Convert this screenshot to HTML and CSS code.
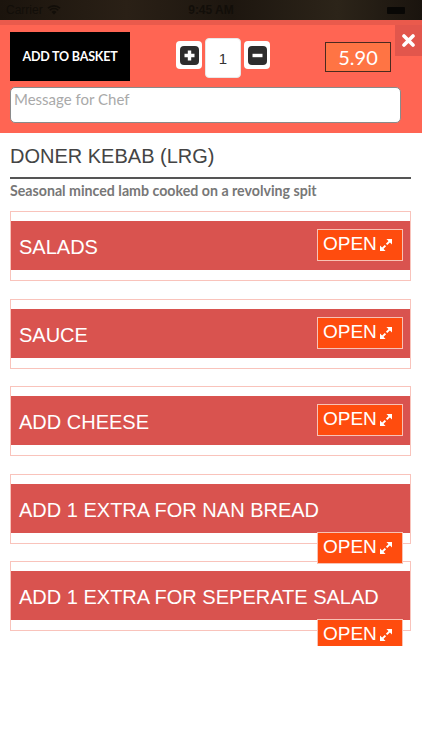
FILE: index.html
```html
<!DOCTYPE html>
<html lang="en">
<head>
    <meta charset="UTF-8">
    <meta name="viewport" content="width=device-width, initial-scale=1.0">
    <title>Doner Kebab (LRG)</title>
    <link rel="stylesheet" href="styles.css">
</head>
<body>
    <div id="status-bar">
        <div class="status-left">
            <span>Carrier</span>
            <svg class="wifi" width="14" height="10" viewBox="0 0 14 10">
                <path d="M7 9.5 L4.6 7 A3.4 3.4 0 0 1 9.4 7 Z" />
                <path d="M2.8 5.2 A6 6 0 0 1 11.2 5.2" />
                <path d="M1 3.3 A8.6 8.6 0 0 1 13 3.3" />
            </svg>
        </div>
        <span class="status-time">9:45 AM</span>
        <span class="battery"></span>
    </div>

    <header id="order-bar">
        <a class="close-btn" role="button" tabindex="0">
            <svg width="13" height="13" viewBox="0 0 13 13">
                <path d="M2 2 L11 11 M11 2 L2 11" />
            </svg>
        </a>
        <div class="order-row">
            <a class="basket-btn" role="button" tabindex="0">ADD TO BASKET</a>
            <div class="qty">
                <a class="qty-btn" role="button" tabindex="0">
                    <span class="qty-icon">
                        <svg width="19" height="19" viewBox="0 0 19 19"><path d="M9.5 4.5 V14.5 M4.5 9.5 H14.5" /></svg>
                    </span>
                </a>
                <input class="qty-input" type="text" value="1">
                <a class="qty-btn" role="button" tabindex="0">
                    <span class="qty-icon">
                        <svg width="19" height="19" viewBox="0 0 19 19"><path d="M4.5 9.5 H14.5" /></svg>
                    </span>
                </a>
            </div>
            <div class="price">5.90</div>
        </div>
        <textarea class="chef-msg" placeholder="Message for Chef"></textarea>
    </header>

    <main id="content">
        <h2 class="dish-title">DONER KEBAB (LRG)</h2>
        <p class="dish-desc">Seasonal minced lamb cooked on a revolving spit</p>

        <section class="option">
            <div class="option-bar">
                <span class="option-name">SALADS</span>
                <a class="open-btn" role="button" tabindex="0">OPEN <svg width="12" height="12" viewBox="0 0 12 12"><path class="head" d="M6.4 0 H12 V5.6 Z M0 6.4 V12 H5.6 Z" /><path class="shaft" d="M9.6 2.4 L6.6 5.4 M2.4 9.6 L5.4 6.6" /></svg></a>
            </div>
        </section>

        <section class="option">
            <div class="option-bar">
                <span class="option-name">SAUCE</span>
                <a class="open-btn" role="button" tabindex="0">OPEN <svg width="12" height="12" viewBox="0 0 12 12"><path class="head" d="M6.4 0 H12 V5.6 Z M0 6.4 V12 H5.6 Z" /><path class="shaft" d="M9.6 2.4 L6.6 5.4 M2.4 9.6 L5.4 6.6" /></svg></a>
            </div>
        </section>

        <section class="option">
            <div class="option-bar">
                <span class="option-name">ADD CHEESE</span>
                <a class="open-btn" role="button" tabindex="0">OPEN <svg width="12" height="12" viewBox="0 0 12 12"><path class="head" d="M6.4 0 H12 V5.6 Z M0 6.4 V12 H5.6 Z" /><path class="shaft" d="M9.6 2.4 L6.6 5.4 M2.4 9.6 L5.4 6.6" /></svg></a>
            </div>
        </section>

        <section class="option">
            <div class="option-bar">
                <span class="option-name">ADD 1 EXTRA FOR NAN BREAD</span>
                <a class="open-btn" role="button" tabindex="0">OPEN <svg width="12" height="12" viewBox="0 0 12 12"><path class="head" d="M6.4 0 H12 V5.6 Z M0 6.4 V12 H5.6 Z" /><path class="shaft" d="M9.6 2.4 L6.6 5.4 M2.4 9.6 L5.4 6.6" /></svg></a>
            </div>
        </section>

        <section class="option">
            <div class="option-bar">
                <span class="option-name">ADD 1 EXTRA FOR SEPERATE SALAD</span>
                <a class="open-btn" role="button" tabindex="0">OPEN <svg width="12" height="12" viewBox="0 0 12 12"><path class="head" d="M6.4 0 H12 V5.6 Z M0 6.4 V12 H5.6 Z" /><path class="shaft" d="M9.6 2.4 L6.6 5.4 M2.4 9.6 L5.4 6.6" /></svg></a>
            </div>
        </section>
    </main>
</body>
</html>
```

FILE: styles.css
```css
:root {
    --header-color: #ff6553;
    --header-top: #ea5a4c;
    --close-color: #e2564c;
    --bar-color: #d9534f;
    --box-border: #f9c3bb;
    --open-color: #ff4c0e;
    --text-dark: #444;
    --text-muted: #777;
}

body {
    margin: 0;
    padding: 0;
    background: white;
    font-family: "Liberation Sans", Arial, sans-serif;
    height: 100vh;
    overflow: hidden;
}

/* status bar over the photo */

#status-bar {
    height: 20px;
    display: flex;
    align-items: center;
    justify-content: space-between;
    padding: 0 17px 0 6px;
    background: linear-gradient(90deg, #1b140d 0%, #2a2016 30%, #1d160f 55%, #2c2419 80%, #1a140e 100%);
    color: #120e09;
    font-size: 12px;
    position: relative;
}

.status-left {
    display: flex;
    align-items: center;
    gap: 4px;
}

.wifi path {
    fill: none;
    stroke: #120e09;
    stroke-width: 1.6;
}

.wifi path:first-child {
    fill: #120e09;
    stroke: none;
}

.status-time {
    position: absolute;
    left: 0;
    right: 0;
    text-align: center;
    font-weight: bold;
}

.battery {
    width: 18px;
    height: 7px;
    background: #080705;
    border-radius: 1px;
}

/* order header */

#order-bar {
    position: relative;
    background: var(--header-color);
    border-top: 5px solid var(--header-top);
    padding: 7px 0 10px 10px;
}

.close-btn {
    position: absolute;
    top: 0;
    right: 0;
    width: 27px;
    height: 31px;
    background: var(--close-color);
    display: flex;
    align-items: center;
    justify-content: center;
}

.close-btn path {
    stroke: white;
    stroke-width: 3.6;
    stroke-linecap: round;
}

.order-row {
    display: flex;
    align-items: center;
    padding-right: 31px;
}

.basket-btn {
    width: 120px;
    height: 49px;
    background: black;
    color: white;
    font-family: Lato, sans-serif;
    font-weight: bold;
    font-size: 12.5px;
    display: flex;
    align-items: center;
    justify-content: center;
    letter-spacing: -0.2px;
}

.qty {
    display: flex;
    align-items: flex-start;
    gap: 3px;
    margin: 3px 0 0 46px;
}

.qty-btn {
    width: 26px;
    height: 28px;
    margin-top: 3px;
    background: white;
    border-radius: 4px;
    display: flex;
    align-items: center;
    justify-content: center;
}

.qty-icon {
    width: 19px;
    height: 19px;
    background: #2d2d2d;
    border-radius: 4px;
    display: flex;
}

.qty-icon path {
    stroke: white;
    stroke-width: 3.4;
}

.qty-input {
    box-sizing: border-box;
    width: 36px;
    height: 40px;
    margin: 0;
    padding: 0;
    border: 1px solid #e8e8e8;
    border-radius: 4px;
    background: white;
    color: #333;
    text-align: center;
    font-family: "Liberation Sans", Arial, sans-serif;
    font-size: 15px;
}

.price {
    margin-left: auto;
    box-sizing: border-box;
    width: 66px;
    height: 30px;
    background: #ff7444;
    border: 1px solid #4b2a1f;
    color: white;
    font-family: Lato, sans-serif;
    font-size: 20px;
    text-align: center;
    line-height: 28px;
}

.chef-msg {
    display: block;
    box-sizing: border-box;
    width: 391px;
    height: 36px;
    margin: 6px 0 0;
    padding: 2px 3px;
    border: 1px solid #8a8a8a;
    border-radius: 5px;
    background: white;
    resize: none;
    font-family: Lato, sans-serif;
    font-size: 15px;
}

.chef-msg::placeholder {
    color: #a9a9a9;
}

/* dish details */

#content {
    height: 513px;
    overflow: hidden;
    padding: 0 11px 0 10px;
}

.dish-title {
    margin: 11px 0 0;
    padding-bottom: 9px;
    border-bottom: 2px solid #555;
    font-size: 20px;
    font-weight: normal;
    line-height: 24px;
    color: var(--text-dark);
}

.dish-desc {
    margin: 4px 0 12px;
    font-family: Lato, sans-serif;
    font-weight: bold;
    font-size: 14.2px;
    line-height: 16px;
    color: var(--text-muted);
}

.option {
    border: 1px solid var(--box-border);
    padding: 9px 0 10px;
    margin-bottom: 17.5px;
}

.option-bar {
    height: 49px;
    box-sizing: border-box;
    background: var(--bar-color);
    display: flex;
    flex-wrap: wrap;
    align-content: flex-start;
    row-gap: 6px;
    padding: 8px 7px 0 8px;
}

.option-name {
    color: white;
    font-size: 20px;
    line-height: 32px;
    padding-top: 2px;
    margin-right: 10px;
    white-space: nowrap;
}

.open-btn {
    margin-left: auto;
    box-sizing: border-box;
    width: 86px;
    height: 32px;
    background: var(--open-color);
    border: 1px solid #f8c2b4;
    color: white;
    font-size: 19px;
    display: flex;
    align-items: center;
    gap: 3px;
    padding: 0 0 2px 5px;
}

.open-btn svg {
    margin-top: 2px;
}

.open-btn .head {
    fill: white;
}

.open-btn .shaft {
    stroke: white;
    stroke-width: 2;
}
```
